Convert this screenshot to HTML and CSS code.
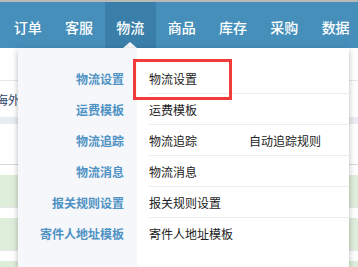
FILE: index.html
```html
<!DOCTYPE html>
<html lang="zh">
<head>
<meta charset="utf-8">
<link rel="stylesheet" href="styles.css">
</head>
<body>
<div class="topline"></div>
<nav class="nav">
  <div class="nav-item">订单</div>
  <div class="nav-item">客服</div>
  <div class="nav-item active">物流</div>
  <div class="nav-item">商品</div>
  <div class="nav-item">库存</div>
  <div class="nav-item">采购</div>
  <div class="nav-item">数据</div>
</nav>
<main class="page">
  <div class="toolbar"></div>
  <div class="tabs"><span class="tab-text">海外</span></div>
  <div class="band"></div>
  <div class="panel"></div>
  <div class="gap"></div>
  <div class="green"></div>
  <div class="sep"></div>
  <div class="green"></div>
  <div class="sep"></div>
  <div class="green short"></div>
</main>
<div class="dropdown">
  <div class="labels">
    <div class="label">物流设置</div>
    <div class="label">运费模板</div>
    <div class="label">物流追踪</div>
    <div class="label">物流消息</div>
    <div class="label">报关规则设置</div>
    <div class="label">寄件人地址模板</div>
  </div>
  <div class="links">
    <div class="row"><span class="link">物流设置</span></div>
    <div class="row"><span class="link">运费模板</span></div>
    <div class="row"><span class="link">物流追踪</span><span class="link">自动追踪规则</span></div>
    <div class="row"><span class="link">物流消息</span></div>
    <div class="row"><span class="link">报关规则设置</span></div>
    <div class="row last"><span class="link">寄件人地址模板</span></div>
  </div>
</div>
<div class="highlight"></div>
</body>
</html>
```
FILE: styles.css
```css
* { box-sizing: border-box; }
html, body { margin: 0; padding: 0; }
body {
  width: 358px;
  height: 267px;
  overflow: hidden;
  background: #fff;
  font-family: "Noto Sans CJK SC", "Noto Sans", sans-serif;
  position: relative;
}
.topline { height: 2px; background: #b9b9b9; }
.nav {
  height: 46px;
  background: #468fbb;
  display: flex;
  padding-left: 2px;
}
.nav-item {
  position: relative;
  width: 51.33px;
  flex: none;
  display: flex;
  align-items: center;
  justify-content: center;
  padding-top: 4px;
  color: #fff;
  font-size: 14px;
  font-weight: 500;
  white-space: nowrap;
}
.nav-item.active { background: #3a7faa; }
.nav-item.active::after {
  content: "";
  position: absolute;
  left: 50%;
  bottom: 0;
  margin-left: -7px;
  border-left: 7px solid transparent;
  border-right: 7px solid transparent;
  border-bottom: 6px solid #f5f7fa;
}
.toolbar { height: 33px; border-bottom: 1px solid #e6e6e6; }
.tabs {
  height: 36px;
  display: flex;
  align-items: center;
  font-size: 12px;
  color: #2d4468;
  overflow: hidden;
}
.tab-text { margin-left: -4px; }
.band { height: 7px; background: #e9edf1; }
.panel { height: 41px; border-bottom: 1px solid #d6d6d6; }
.gap { height: 10px; }
.green { height: 32px; background: #dfeddb; }
.green.short { height: 6px; }
.sep { height: 11px; border-top: 1px solid #e8e8e8; }
.dropdown {
  position: absolute;
  left: 18px;
  top: 48px;
  width: 331px;
  height: 219px;
  display: flex;
  background: #fff;
  box-shadow: 0 2px 6px rgba(0, 0, 0, 0.28);
}
.labels {
  width: 120px;
  background: #f5f7fa;
  padding-top: 15px;
}
.label {
  height: 31px;
  line-height: 31px;
  text-align: right;
  padding-right: 13px;
  font-size: 12px;
  font-weight: 700;
  color: #4f92c4;
  white-space: nowrap;
}
.links {
  flex: 1;
  padding: 15px 0 0 12px;
}
.row {
  height: 31px;
  display: flex;
  align-items: center;
  border-bottom: 1px solid #ececec;
  font-size: 12px;
  color: #222;
}
.row.last { border-bottom: none; }
.link { width: 100px; white-space: nowrap; }
.highlight {
  position: absolute;
  left: 133px;
  top: 59px;
  width: 99px;
  height: 41px;
  border: 3px solid #f23b3b;
}
```
